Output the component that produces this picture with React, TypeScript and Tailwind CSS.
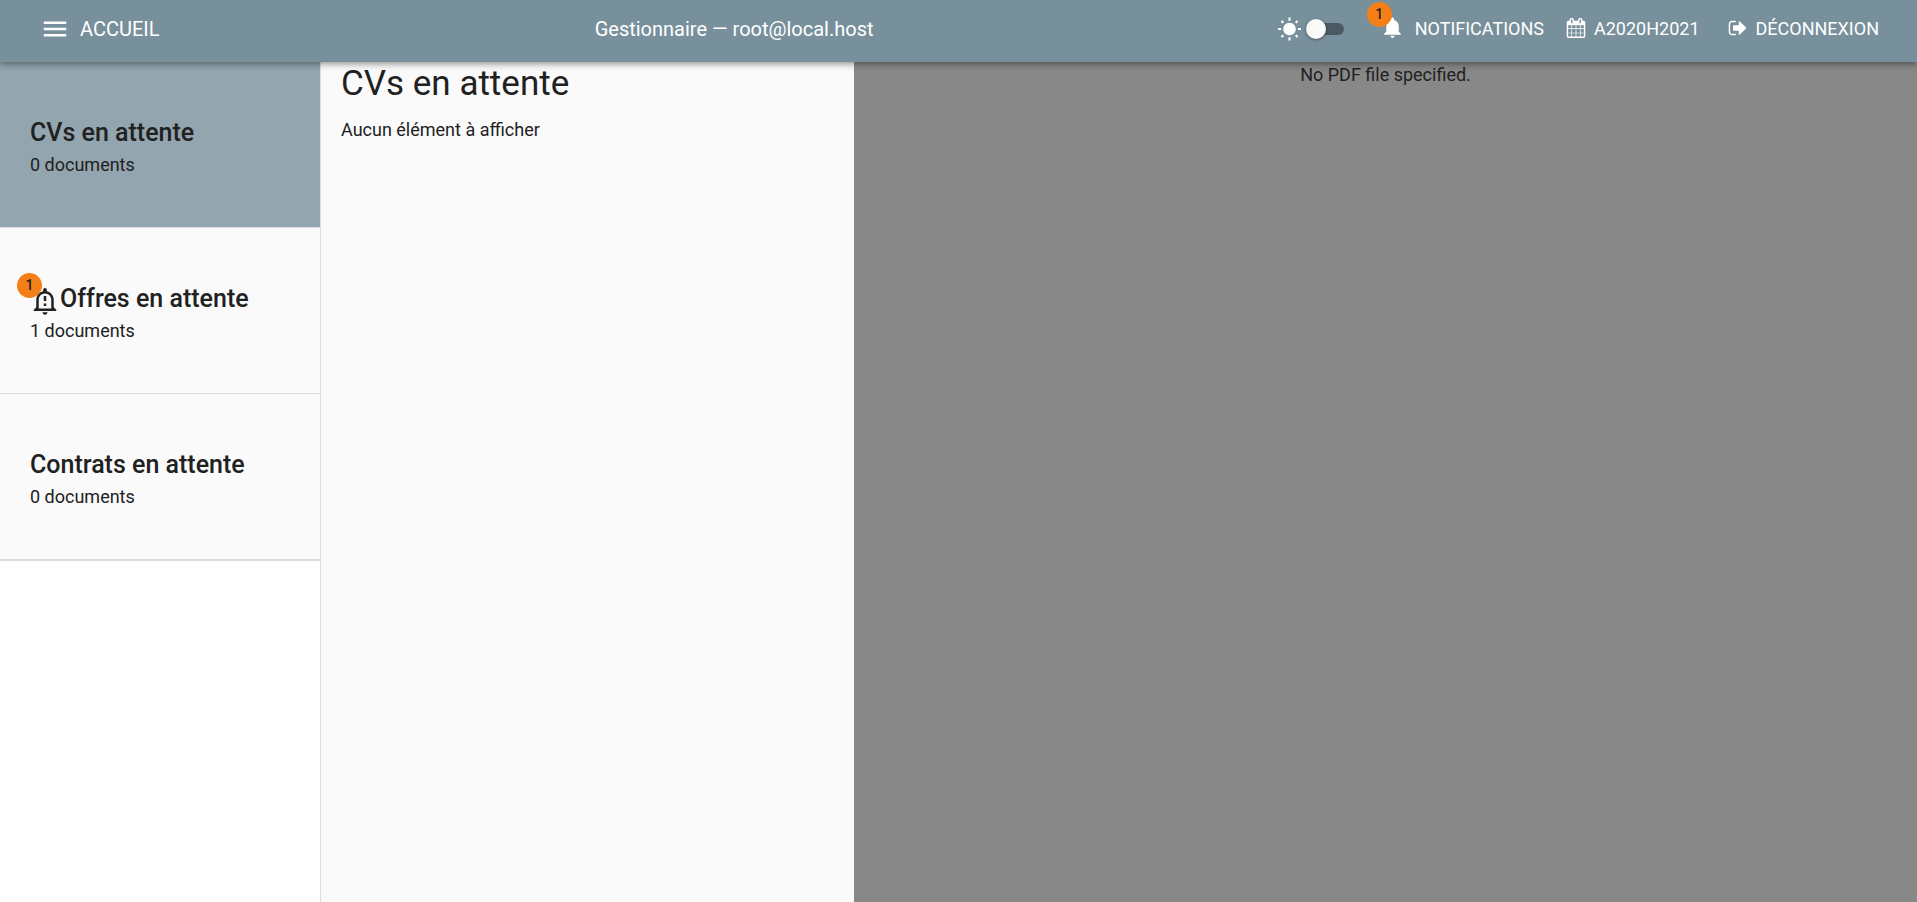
import { useState } from "react";
import type { ReactNode } from "react";
import { MdMenu, MdNotifications, MdOutlineNotificationImportant, MdWbSunny } from "react-icons/md";

function CalendarIcon() {
  return (
    <svg viewBox="0 0 1792 1792" className="mb-0.5 size-5" fill="currentColor" aria-hidden="true">
      <path d="M192 1664h288v-288h-288v288zm352 0h320v-288h-320v288zm-352-352h288v-320h-288v320zm352 0h320v-320h-320v320zm-352-384h288v-288h-288v288zm736 736h320v-288h-320v288zm-384-736h320v-288h-320v288zm768 736h288v-288h-288v288zm-384-352h320v-320h-320v320zm-352-864v-288q0-13-9.5-22.5t-22.5-9.5h-64q-13 0-22.5 9.5t-9.5 22.5v288q0 13 9.5 22.5t22.5 9.5h64q13 0 22.5-9.5t9.5-22.5zm736 864h288v-320h-288v320zm-384-384h320v-288h-320v288zm384 0h288v-288h-288v288zm32-480v-288q0-13-9.5-22.5t-22.5-9.5h-64q-13 0-22.5 9.5t-9.5 22.5v288q0 13 9.5 22.5t22.5 9.5h64q13 0 22.5-9.5t9.5-22.5zm384-64v1280q0 52-38 90t-90 38h-1408q-52 0-90-38t-38-90v-1280q0-52 38-90t90-38h128v-96q0-66 47-113t113-47h64q66 0 113 47t47 113v96h384v-96q0-66 47-113t113-47h64q66 0 113 47t47 113v96h128q52 0 90 38t38 90z" />
    </svg>
  );
}

function SignOutIcon() {
  return (
    <svg viewBox="0 0 1792 1792" className="mb-0.5 size-5" fill="currentColor" aria-hidden="true">
      <path d="M704 1440q0 4 1 20t.5 26.5-3 23.5-10 19.5-20.5 6.5h-320q-119 0-203.5-84.5t-84.5-203.5v-704q0-119 84.5-203.5t203.5-84.5h320q13 0 22.5 9.5t9.5 22.5q0 4 1 20t.5 26.5-3 23.5-10 19.5-20.5 6.5h-320q-66 0-113 47t-47 113v704q0 66 47 113t113 47h312l11.5 1 11.5 3 8 5.5 7 9 2 13.5zm928-544q0 26-19 45l-544 544q-19 19-45 19t-45-19-19-45v-288h-448q-26 0-45-19t-19-45v-384q0-26 19-45t45-19h448v-288q0-26 19-45t45-19 45 19l544 544q19 19 19 45z" />
    </svg>
  );
}

function Badge({ count, className, children }: { count: number; className: string; children: ReactNode }) {
  return (
    <span className={`relative inline-flex ${className}`}>
      {children}
      <span className="absolute -top-[13px] -left-[13px] flex size-[25px] items-center justify-center rounded-full bg-[#f57f17] text-sm leading-none font-medium text-[#212121]">
        {count}
      </span>
    </span>
  );
}

function ThemeSwitch() {
  const [dark, setDark] = useState(false);
  return (
    <label className="flex cursor-pointer items-center gap-1">
      <MdWbSunny className="size-[25px]" aria-hidden="true" />
      <span className="relative flex h-5 w-[38px] items-center">
        <input
          type="checkbox"
          aria-label="Thème sombre"
          checked={dark}
          onChange={(e) => setDark(e.target.checked)}
          className="peer h-3 w-full cursor-pointer appearance-none rounded-full bg-[#4b5a62]"
        />
        <span className="pointer-events-none absolute left-0 size-5 rounded-full bg-[#fafafa] shadow-[0_1px_3px_rgba(0,0,0,0.4)] peer-checked:right-0 peer-checked:left-auto" />
      </span>
    </label>
  );
}

const sections = [
  { title: "CVs en attente", count: 0 },
  { title: "Offres en attente", count: 1 },
  { title: "Contrats en attente", count: 0 },
];

export default function App() {
  const [selected, setSelected] = useState(0);
  return (
    <div className="flex min-h-screen flex-col bg-white font-['Roboto',sans-serif] text-lg text-[#212121]">
      <header className="z-10 flex h-[62px] items-center justify-between bg-[#78909c] pr-[38px] pb-1 pl-10 text-white shadow-[0_2px_4px_-1px_rgba(0,0,0,0.2),0_4px_5px_rgba(0,0,0,0.14),0_1px_10px_rgba(0,0,0,0.12)]">
        <div className="flex items-center gap-2.5 pr-8 text-xl">
          <button type="button" aria-label="Menu">
            <MdMenu className="size-[30px]" />
          </button>
          <a href="#accueil">ACCUEIL</a>
        </div>
        <p className="text-xl">Gestionnaire — root@local.host</p>
        <nav className="flex items-center">
          <ThemeSwitch />
          <button type="button" className="ml-9 flex items-center gap-2.5">
            <Badge count={1} className="mb-1">
              <MdNotifications className="size-[25px]" />
            </Badge>
            NOTIFICATIONS
          </button>
          <button type="button" className="ml-[22px] flex items-center gap-2">
            <CalendarIcon />
            A2020H2021
          </button>
          <button type="button" className="ml-7 flex items-center gap-2">
            <SignOutIcon />
            DÉCONNEXION
          </button>
        </nav>
      </header>
      <main className="flex flex-1">
        <aside className="w-[321px] shrink-0 border-r border-[#dcdcdc]">
          <ul className="border-b border-[#dcdcdc]">
            {sections.map((s, i) => (
              <li key={s.title} className="border-b border-[#dcdcdc]">
                <button
                  type="button"
                  onClick={() => setSelected(i)}
                  className={`flex h-[165px] w-full flex-col justify-center px-[30px] pt-2 text-left ${i === selected ? "bg-[#93a5ae]" : "bg-[#fafafa]"}`}
                >
                  <span className="flex h-8 items-center text-[25px] font-medium">
                    {s.count > 0 && (
                      <Badge count={s.count} className="mt-0.5">
                        <MdOutlineNotificationImportant className="size-[30px]" />
                      </Badge>
                    )}
                    {s.title}
                  </span>
                  <span className="leading-[30px]">{s.count} documents</span>
                </button>
              </li>
            ))}
          </ul>
        </aside>
        <section className="w-1/3 max-w-[533px] bg-[#fafafa] px-5">
          <h1 className="text-[35px] leading-[44px]">{sections[selected].title}</h1>
          <p className="mt-2.5">Aucun élément à afficher</p>
        </section>
        <section className="flex-1 bg-[#888888] text-center">
          <p className="leading-[26px]">No PDF file specified.</p>
        </section>
      </main>
    </div>
  );
}
